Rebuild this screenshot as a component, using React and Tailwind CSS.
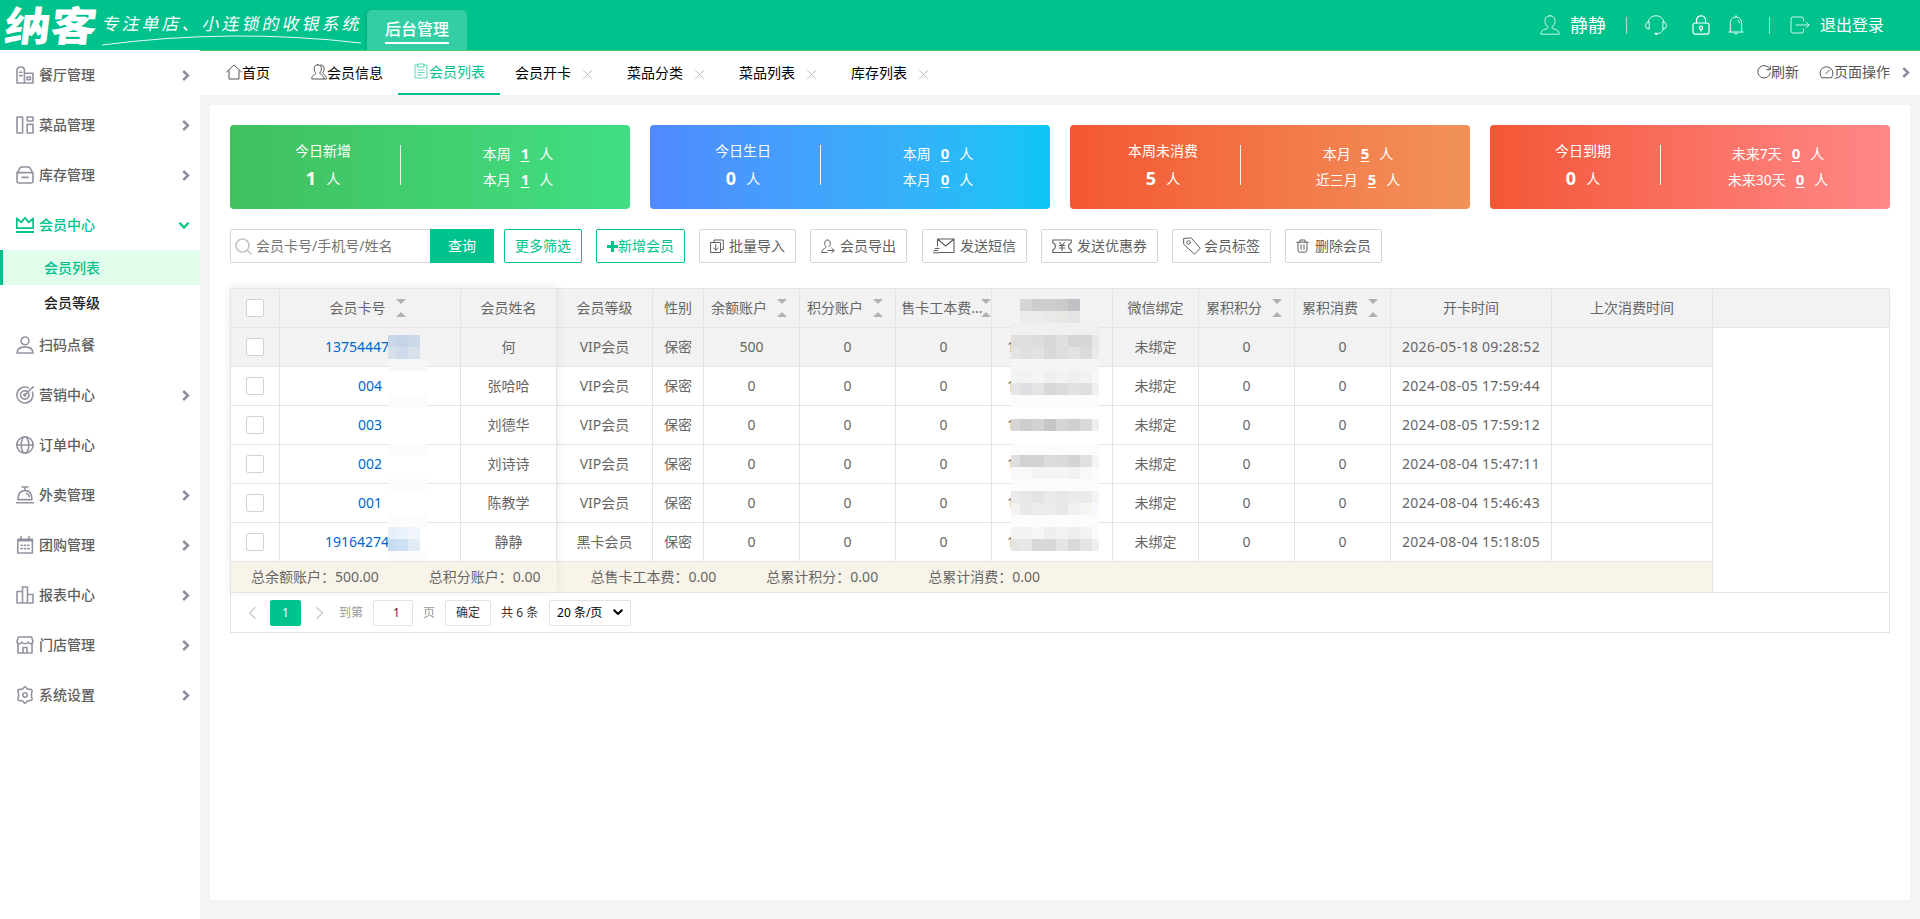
import React from "react";

/**
 * Panel de miembros
 * - Cabecera, menú lateral, pestañas, tarjetas de resumen y tabla
 */

// Iconos del menú lateral
const menuIcons = {
  restaurant: (
    <>
      <path d="M1 17V4.5Q1 1 4.7 1T8.4 4.5V17M8.4 7.3H17V17H1M3.5 6.2h2.6M3.5 9.6h2.6" />
      <path d="M11 11h3.4v2.8H11z" />
    </>
  ),
  dish: <path d="M1 1h5.6v16H1zM11.2 1H17v4h-5.8zM11.2 8.4H17V17h-5.8z" />,
  stock: <path d="M1 6.6h16V15q0 2-2 2H3q-2 0-2-2zM1.6 6.4 4 1.8Q4.4 1 5.4 1h7.2q1 0 1.4.8l2.4 4.6M6 11.4h6" />,
  crown: <path d="M.8 2.4v9.8h16.4V2.4l-4.4 4L9 1.8 5.2 6.4zM0 16h18" strokeWidth="1.8" />,
  user: <path d="M9 1a3.9 3.9 0 1 0 0 7.8A3.9 3.9 0 0 0 9 1M1 17q.6-5.6 6-5.9h4q5.4.3 6 5.9z" />,
  target: (
    <>
      <path d="M16.4 6.2A8 8 0 1 1 12.2 1.7" />
      <path d="M12.6 7.3A4.2 4.2 0 1 1 10.7 5.2M8.6 9.2l6-6M14.2 3.4 17.4.8" />
      <circle cx="8.8" cy="9" r="1" />
    </>
  ),
  globe: (
    <>
      <circle cx="9" cy="9" r="8.2" />
      <ellipse cx="9" cy="9" rx="3.8" ry="8.2" />
      <path d="M1 9h16" />
    </>
  ),
  bell: <path d="M6 1h6M9 1v3M2 13.6Q2 4.6 9 4.6t7 9zM10.4 7.5q2.4.6 3 3M.4 16.8h17.2" />,
  calendar: (
    <>
      <path d="M1.8 3.2h14.6V17H1.8zM2 4.7h14.4M5 .6v3M13 .6v3" />
      <path d="M5 9.2h1.2M8.4 9.2h1.2M11.8 9.2H13M5 12.6h1.2M8.4 12.6h1.2M11.8 12.6H13" />
    </>
  ),
  chart: <path d="M1 5.5h5.5V17H1zM6.5 1h5v16h-5zM11.5 8.5H17V17h-5.5z" />,
  shop: <path d="M2 8v9h14V8M2.4 1h13.2L17 5.5q-.4 2.2-2.4 2.2T12 6q-.8 1.7-3 1.7T6 6q-.6 1.7-2.6 1.7T1 5.5zM7 17v-5.5h4V17" />,
  gear: (
    <>
      <path d="M9 .8c1 0 1.5 2 3 2.4s3.500-.3 4 .8-.6 2.500-.6 5 1 4 .6 5-2.500.4-4 .8-2 2.400-3 2.400-1.500-2-3-2.400-3.500.3-4-.8.6-2.500.6-5-1-4-.6-5 2.500-.4 4-.8 2-2.400 3-2.400z" />
      <circle cx="9" cy="9" r="2.2" />
    </>
  ),
};

const menu = [
  { label: "餐厅管理", icon: "restaurant", arrow: true },
  { label: "菜品管理", icon: "dish", arrow: true },
  { label: "库存管理", icon: "stock", arrow: true },
  { label: "会员中心", icon: "crown", open: true, children: ["会员列表", "会员等级"] },
  { label: "扫码点餐", icon: "user" },
  { label: "营销中心", icon: "target", arrow: true },
  { label: "订单中心", icon: "globe" },
  { label: "外卖管理", icon: "bell", arrow: true },
  { label: "团购管理", icon: "calendar", arrow: true },
  { label: "报表中心", icon: "chart", arrow: true },
  { label: "门店管理", icon: "shop", arrow: true },
  { label: "系统设置", icon: "gear", arrow: true },
];

const stats = [
  {
    title: "今日新增",
    value: 1,
    lines: [["本周", 1], ["本月", 1]],
    bg: "bg-linear-to-r from-[#41c05e] to-[#41de83]",
  },
  {
    title: "今日生日",
    value: 0,
    lines: [["本周", 0], ["本月", 0]],
    bg: "bg-linear-to-r from-[#5089ff] to-[#0bc6f5]",
  },
  {
    title: "本周未消费",
    value: 5,
    lines: [["本月", 5], ["近三月", 5]],
    bg: "bg-linear-to-r from-[#f35633] to-[#f1925a]",
  },
  {
    title: "今日到期",
    value: 0,
    lines: [["未来7天", 0], ["未来30天", 0]],
    bg: "bg-linear-to-r from-[#f35633] to-[#ff8787]",
  },
];

const columns = [
  { key: "check", w: "w-[49px]" },
  { key: "card", label: "会员卡号", w: "w-[181px]", sort: true },
  { key: "name", label: "会员姓名", w: "w-[96px]" },
  { key: "level", label: "会员等级", w: "w-[96px]" },
  { key: "sex", label: "性别", w: "w-[51px]" },
  { key: "balance", label: "余额账户", w: "w-[96px]", sort: true },
  { key: "points", label: "积分账户", w: "w-[96px]", sort: true },
  { key: "fee", label: "售卡工本费...", w: "w-[96px]", sort: true, tight: true },
  { key: "phone", label: "", w: "w-[121px]" },
  { key: "wechat", label: "微信绑定", w: "w-[86px]" },
  { key: "sumPoints", label: "累积积分", w: "w-[96px]", sort: true },
  { key: "sumSpent", label: "累积消费", w: "w-[96px]", sort: true },
  { key: "created", label: "开卡时间", w: "w-[161px]" },
  { key: "last", label: "上次消费时间", w: "w-[161px]" },
];

const members = [
  { card: "13754447", name: "何", level: "VIP会员", balance: 500, created: "2026-05-18 09:28:52", masked: true, hover: true },
  { card: "004", name: "张哈哈", level: "VIP会员", balance: 0, created: "2024-08-05 17:59:44" },
  { card: "003", name: "刘德华", level: "VIP会员", balance: 0, created: "2024-08-05 17:59:12" },
  { card: "002", name: "刘诗诗", level: "VIP会员", balance: 0, created: "2024-08-04 15:47:11" },
  { card: "001", name: "陈教学", level: "VIP会员", balance: 0, created: "2024-08-04 15:46:43" },
  { card: "19164274", name: "静静", level: "黑卡会员", balance: 0, created: "2024-08-04 15:18:05", masked: true },
];

// Mosaicos que ocultan los datos personales; cada fila mide 12px
const W = "#ffffff";
const F = "#fcfcfc";
const cardMask = [
  ["#cad7e8", "#c5d4e6", "#cbd8e8", "#f2f2f2"],
  ["#d8e0ec", "#cfdbea", "#d8e1ec", "#f2f2f2"],
  ["#f6f6f6", "#f6f6f6", "#f6f6f6", "#f6f6f6"],
  [W, W, W, W],
  [W, W, W, W],
  [F, F, F, F],
  [W, W, W, W],
  [W, W, W, W],
  [W, W, W, W],
  [F, F, F, F],
  [W, W, W, W],
  [W, W, W, W],
  [F, F, F, F],
  [W, W, W, W],
  [W, W, W, W],
  [F, F, F, F],
  ["#e6eff9", "#e9f2fb", "#f0f6fb", W],
  ["#c8dcf1", "#cee1f4", "#e1ebf5", W],
  [F, F, F, F],
];
const row = (c) => [c, c, c, c, c, c, c, c];
const phoneMask = [
  ["transparent", "#d6d6d6", "#cccdcd", "#cecece", "#c9cac9", "#c0c1c5", "transparent", "transparent"],
  ["transparent", "#ebebeb", "#ebebea", "#e8e9e9", "#e8e7e4", "#e3e5e7", "transparent", "transparent"],
  row("#f0f0f0"),
  ["#dfdedd", "#dddee0", "#dddddc", "#d6d7d9", "#dfdfde", "#d5d5d5", "#d6d6d6", "#e6e7e6"],
  ["#e3e4e3", "#dfdfdf", "#e1e2e2", "#d8d9da", "#dfdddb", "#e1e2e2", "#dadbda", "#e8eae8"],
  row("#f5f5f5"),
  ["#f3f3f2", "#f2f2f1", "#f5f5f5", "#eef0ef", "#f2f2f1", "#efefee", "#f1f2f1", "#f8faf9"],
  ["#e5e5e5", "#dedfe2", "#e5e4e2", "#d7d8da", "#dddcda", "#dfe1e3", "#dfdedc", "#eef0ef"],
  row(F),
  row(W),
  ["#d6d5d4", "#cccdcf", "#d5d3d2", "#c5c6c8", "#d6d5d3", "#cfd0d0", "#d9d9d9", "#eef0ef"],
  row(W),
  row(F),
  ["#dfdfde", "#d1d2d4", "#d5d3d2", "#dbdcdb", "#d9dad9", "#d3d4d6", "#e1e0df", "#f2f4f6"],
  ["#f7f8f7", "#f7f8f8", "#f3f4f3", "#f4f4f4", "#f4f5f4", "#f1f2f2", "#f7f8f7", "#fafbfa"],
  row(F),
  ["#eaeaea", "#e7e7e9", "#e4e2e3", "#eaeaea", "#e7e7e6", "#ebebeb", "#ebebea", "#f3f3f3"],
  ["#f3f3f2", "#e8e8ea", "#ebebeb", "#ebeceb", "#e7e8e7", "#f1f1f2", "#f5f5f3", "#f7fafc"],
  row(F),
  ["#f2f3f2", "#f1f2f1", "#f7f7f5", "#edf0ef", "#f2f3f2", "#eeefee", "#f2f3f2", "#f9fafa"],
  ["#e5e5e4", "#e5e7e9", "#d8d8d7", "#d7d9d8", "#e5e5e4", "#d9d9d8", "#e5e5e3", "#eef0ef"],
];

const Chevron = ({ className }) => (
  <svg className={className} width="8" height="11" viewBox="0 0 8 11" fill="none" stroke="currentColor" strokeWidth="2.4">
    <path d="M1.2 1 6 5.5 1.2 10" />
  </svg>
);

const Line = ({ w = 18, h = 18, sw = 1, className = "", children }) => (
  <svg
    className={`shrink-0 ${className}`}
    width={w}
    height={h}
    viewBox={`0 0 ${w} ${h}`}
    fill="none"
    stroke="currentColor"
    strokeWidth={sw}
    strokeLinejoin="round"
    strokeLinecap="round"
  >
    {children}
  </svg>
);

function Header() {
  return (
    <header className="flex h-[51px] border-b border-[#44cf6c] bg-[#00c28d] text-white">
      <div className="w-[98px] shrink-0 pl-[5px]">
        <div className="w-[92px] origin-center -skew-x-6 scale-y-88 whitespace-nowrap text-[46px] leading-[51px] font-black">
          纳客
        </div>
      </div>
      <div className="relative w-[269px] shrink-0 pl-[5px]">
        <div className="-skew-x-12 whitespace-nowrap font-['Noto_Sans_CJK_SC',sans-serif] text-[17px] leading-[46px] tracking-[3px]">
          专注单店、小连锁的收银系统
        </div>
        <svg className="absolute top-[35px] left-1" width="260" height="12" fill="none" stroke="white">
          <path d="M0 10Q130-7 259 8" strokeWidth=".9" />
        </svg>
      </div>
      <div className="mt-[10px] flex h-10 w-[100px] flex-col items-center rounded-t-[5px] bg-[#33cea4] pt-2 shadow-[-2px_0_3px_rgba(0,0,0,0.08)]">
        <span className="h-[24px] w-16 whitespace-nowrap text-base leading-[22px] font-medium">后台管理</span>
        <span className="h-[2px] w-16 bg-white" />
      </div>
      <div className="ml-auto flex items-center pr-[36px]">
        <Line w={20} h={20} className="text-white/80">
          <path d="M10 .8C6.500.8 5 3 5 5.700c0 2.800 1.200 5 3 6 .2 1.400-.4 1.700-2 2.300C2.500 15 .8 16 .8 19.200h18.400c0-3.200-1.700-4.200-5.200-5.200-1.600-.6-2.200-.9-2-2.300 1.800-1 3-3.200 3-6C15 3 13.500.8 10 .8z" />
        </Line>
        <span className="ml-[10px] text-lg">静静</span>
        <span className="ml-5 h-[17px] w-px bg-white/60" />
        <Line w={22} h={20} className="ml-[18px] text-white/90">
          <path d="M3 7C3.800 3 7 .8 11 .8S18.200 3 19 7M4.200 7v7H3q-2.400-.5-2.400-3.500T3 7zM17.800 7v7H19q2.400-.5 2.400-3.500T19 7zM18.500 14q-1.500 4.600-7 4.800" />
          <path d="M10.500 18.800h1.500" strokeWidth="2" />
        </Line>
        <Line w={18} h={20} sw={1.2} className="ml-[25px]">
          <rect x="1" y="8" width="16" height="11.200" rx="2.500" />
          <path d="M4.500 8V5a4.500 4.200 0 0 1 9 0v3M9 14.500v1.600" />
          <circle cx="9" cy="12.800" r="1.600" />
        </Line>
        <Line w={16} h={20} className="ml-[18px] text-white/90">
          <path d="M8 .6v1.400M1 17h14M2.300 17V9c0-4.500 2.200-7 5.700-7s5.700 2.500 5.700 7v8M6 18q2 2.400 4 0M10 5q1.300 1 1.500 3" />
        </Line>
        <span className="ml-[25px] h-[17px] w-px bg-white/60" />
        <Line w={20} h={18} className="ml-5 text-white/80">
          <path d="M13.500 5V3q0-2-2-2H3Q1 1 1 3v12q0 2 2 2h8.500q2 0 2-2v-2M6 9h13M16 6l3 3-3 3" />
        </Line>
        <span className="ml-[10px] text-base">退出登录</span>
      </div>
    </header>
  );
}

function Sidebar() {
  return (
    <aside className="w-[200px] shrink-0 bg-white text-sm font-medium">
      {menu.map((m) => (
        <div key={m.label}>
          <div
            className={`flex h-[50px] items-center pr-[10px] pl-4 ${m.open ? "text-[#00c28d]" : "text-[#5f5f5f]"}`}
          >
            <Line sw={1.6} className={m.open ? "" : "text-[#9293a0]"}>
              {menuIcons[m.icon]}
            </Line>
            <span className="ml-[5px]">{m.label}</span>
            {m.arrow && <Chevron className="ml-auto text-[#8c8e9b]" />}
            {m.open && <Chevron className="mr-[2px] ml-auto rotate-90" />}
          </div>
          {m.children?.map((c, i) => (
            <div
              key={c}
              className={`flex h-[35px] items-center border-l-3 pl-[41px] ${
                i === 0 ? "border-[#00c28d] bg-[#e2fdeb] text-[#00c28d]" : "border-transparent text-[#222]"
              }`}
            >
              {c}
            </div>
          ))}
        </div>
      ))}
    </aside>
  );
}

function TabBar() {
  return (
    <nav className="flex h-[44px] bg-white pl-[10px] text-sm leading-[44px] text-black">
      <div className="flex w-[86px] items-center pl-4">
        <Line w={16} h={16} className="-mt-[3px] text-[#555]">
          <path d="M.5 8 8 1l7.500 7M3 6.500V15h10V6.500" />
        </Line>
        首页
      </div>
      <div className="flex w-[102px] items-center pl-[15px]">
        <Line w={16} h={16} className="-mt-[3px] text-[#555]">
          <path d="M6.800.8C4.500.8 3.200 2.300 3.200 4.800c0 2 .8 3.400 1.800 4.200 0 1.500-4.300 1.500-4.300 6h12.200c0-4.500-4.300-4.500-4.300-6 1-.8 1.800-2.200 1.800-4.200C10.400 2.300 9.100.8 6.800.8zM9.500 1c2.400 0 3.600 1.400 3.600 3.800 0 2-.6 3.200-1.500 4 .2 1.400 3.700 1.800 3.700 6.200h-2.400" />
        </Line>
        会员信息
      </div>
      <div className="flex w-[102px] items-center border-b-2 border-[#00c28d] pl-[15px] text-[#00c28d]">
        <Line w={16} h={16} className="-mt-[3px] text-[#00c28d]/70">
          <path d="M5 2H2v13h12V2h-3M5 1h6v3H5zM5 7h6M5 9.500h6M5 12h4" strokeWidth=".9" />
        </Line>
        会员列表
      </div>
      {["会员开卡", "菜品分类", "菜品列表", "库存列表"].map((t) => (
        <div key={t} className="flex w-[112px] items-center pl-[15px]">
          {t}
          <Line w={9} h={9} className="mt-[2px] ml-[12px] text-[#bbb]">
            <path d="m.5.500 8 8M8.500.500l-8 8" />
          </Line>
        </div>
      ))}
      <div className="ml-auto flex items-center pr-[10px] pb-[2px] text-[#555]">
        <Line w={14} h={14}>
          <path d="M13 4.500A6.300 6.300 0 1 0 13.300 8M13.300 1v3.700H9.500" />
        </Line>
        <span>刷新</span>
        <Line w={15} h={14} className="ml-5">
          <path d="M2.500 12.500A6.500 6.500 0 1 1 12.500 12.500zM7 8.500l3.500-3.500" />
        </Line>
        <span>页面操作</span>
        <Chevron className="ml-[12px] text-[#8c8e9b]" />
      </div>
    </nav>
  );
}

function StatCard({ title, value, lines, bg }) {
  return (
    <div className={`flex h-[84px] w-[400px] items-center rounded text-sm text-white ${bg}`}>
      <div className="flex w-[170px] flex-col items-center pb-1 pl-4">
        <div className="h-[25px] leading-6">{title}</div>
        <div className="flex h-[28px] items-center gap-[10px]">
          <b className="text-lg leading-7">{value}</b>
          <span className="pt-[3px]">人</span>
        </div>
      </div>
      <div className="mb-1 h-10 w-px bg-white/90" />
      <div className="w-[229px] pb-[1px] pl-[5px]">
        {lines.map(([label, n]) => (
          <div key={label} className="flex h-[26px] items-center justify-center gap-[10px]">
            <span>{label}</span>
            <b className="text-[15px] underline underline-offset-2">{n}</b>
            <span>人</span>
          </div>
        ))}
      </div>
    </div>
  );
}

function ToolButton({ icon, label, className }) {
  return (
    <button className={`flex items-center rounded-xs border border-[#d6d6d6] px-[10px] text-[#5f5f5f] ${className}`}>
      {icon}
      <span className="ml-auto whitespace-nowrap">{label}</span>
    </button>
  );
}

function Toolbar() {
  return (
    <div className="mt-5 flex h-[34px] text-sm">
      <div className="flex w-[200px] items-center rounded-l-xs border border-r-0 border-[#d6d6d6] pl-[4px] text-[#757575]">
        <Line w={17} h={17} sw={1.6} className="text-[#c4c4c4]">
          <circle cx="7.500" cy="7.500" r="6.500" />
          <path d="m12.300 12.300 3.700 3.700" />
        </Line>
        <span className="ml-[4px]">会员卡号/手机号/姓名</span>
      </div>
      <button className="w-16 bg-[#00c28d] text-white">查询</button>
      <button className="ml-[10px] w-[78px] rounded-xs border border-[#00c28d] text-[#00c28d]">更多筛选</button>
      <button className="ml-[14px] flex w-[89px] items-center justify-center rounded-xs border border-[#00c28d] text-[#00c28d]">
        <svg width="11" height="11" fill="currentColor">
          <path d="M4 0h3v4h4v3H7v4H4V7H0V4h4z" />
        </svg>
        新增会员
      </button>
      <ToolButton
        className="ml-[14px] w-[97px]"
        label="批量导入"
        icon={
          <Line w={14} h={14}>
            <path d="M4 3V1h9.300v9.500H11M1 3.500h9.500v10H1zM5.700 5.500V11M3.500 9l2.200 2L8 9" />
          </Line>
        }
      />
      <ToolButton
        className="ml-[14px] w-[97px]"
        label="会员导出"
        icon={
          <Line w={14} h={15}>
            <path d="M6.500 1C4.500 1 3.700 2.400 3.700 4.300c0 1.700.7 2.700 1.500 3.400C5.300 9.500.8 9.200.8 13.500H6M6.500 1c2 0 2.800 1.400 2.800 3.300 0 1.700-.7 2.700-1.500 3.400M7 11.500h6M10.800 9.300l2.400 2.200-2.400 2.200" />
          </Line>
        }
      />
      <ToolButton
        className="ml-[15px] w-[105px]"
        label="发送短信"
        icon={
          <Line w={22} h={16} sw={1.1}>
            <path d="M4.500 8V1h16.500v13.500H6M4.500 1l8.200 7L21 1M2 10.500h4M.8 12.500h4M0 14.700h6" />
          </Line>
        }
      />
      <ToolButton
        className="ml-[14px] w-[117px]"
        label="发送优惠券"
        icon={
          <Line w={20} h={15} sw={1.1}>
            <path d="M.8 1h18.400v2.700q-2.600 1-2.600 3.600t2.600 3.600v2.600H.8v-2.600q2.600-1 2.600-3.600T.8 3.700zM7.500 3.500 10 6.500l2.500-3M7.200 6.500h5.600M7.200 9h5.600M10 6.500v5" />
          </Line>
        }
      />
      <ToolButton
        className="ml-[14px] w-[99px]"
        label="会员标签"
        icon={
          <Line w={18} h={18}>
            <path d="M1 1.500 8 .8l9.200 10.400-5.700 6L1 7.500z" />
            <circle cx="5.500" cy="5.500" r="1.800" />
          </Line>
        }
      />
      <ToolButton
        className="ml-[14px] w-[97px]"
        label="删除会员"
        icon={
          <Line w={13} h={14}>
            <path d="M.8 3.200h11.400M4 3V1h5v2M2 3.500V11q0 2.200 2 2.200h5q2 0 2-2.200V3.500M5 5.800v4.500M8 5.800v4.500" />
          </Line>
        }
      />
    </div>
  );
}

const Checkbox = () => <span className="size-[18px] rounded-xs border border-[#d2d2d2] bg-white" />;

const SortIcon = ({ tight }) => (
  <svg className={tight ? "-ml-[2px] shrink-0" : "mr-[5px] ml-[10px] shrink-0"} width="10" height="18" fill="#b2b2b2">
    <path d="M0 0h10L5 5zM0 18h10l-5-5z" />
  </svg>
);

function Mosaic({ rows, cols, className }) {
  return (
    <div className={`absolute ${className}`}>
      {rows.map((r, i) => (
        <div key={i} className="flex h-3">
          {r.map((c, j) => (
            <div
              key={j}
              className={j === 0 ? cols[0] : j === r.length - 1 ? cols[1] : "w-3"}
              style={{ background: c }}
            />
          ))}
        </div>
      ))}
    </div>
  );
}

function cellValue(m, key) {
  switch (key) {
    case "check":
      return <Checkbox />;
    case "card":
      return <span className="text-[#0066cc]">{m.card}</span>;
    case "sex":
      return "保密";
    case "phone":
      return "1";
    case "wechat":
      return "未绑定";
    case "created":
      return <span className="tracking-[0.3px] whitespace-nowrap">{m.created}</span>;
    case "last":
      return "";
    default:
      return m[key] ?? 0;
  }
}

function MemberTable() {
  return (
    <div className="relative mt-[25px] border border-[#e4e4e4] text-sm text-[#666]">
      <div className="flex h-[39px] border-b border-[#e4e4e4] bg-[#f2f2f2]">
        {columns.map((c) => (
          <div
            key={c.key}
            className={`flex shrink-0 items-center justify-center border-r border-[#e4e4e4] whitespace-nowrap ${c.w} ${
              c.tight ? "pl-[5px]" : ""
            }`}
          >
            {c.key === "check" ? <Checkbox /> : c.label}
            {c.sort && <SortIcon tight={c.tight} />}
          </div>
        ))}
      </div>
      <div className="w-[1482px]">
        {members.map((m) => (
          <div key={m.card} className={`flex h-[39px] border-b border-[#e4e4e4] ${m.hover ? "bg-[#f2f2f2]" : ""}`}>
            {columns.map((c) => (
              <div
                key={c.key}
                className={`flex shrink-0 items-center border-r border-[#e4e4e4] ${c.w} ${
                  c.key === "phone" ? "pl-[15px]" : c.key === "card" && m.masked ? "pl-[45px]" : "justify-center"
                }`}
              >
                {cellValue(m, c.key)}
              </div>
            ))}
          </div>
        ))}
        <div className="flex h-[30px] items-center gap-[50px] border-r border-[#e4e4e4] bg-[#f9f4e9] pl-5">
          <span>总余额账户：500.00</span>
          <span>总积分账户：0.00</span>
          <span>总售卡工本费：0.00</span>
          <span>总累计积分：0.00</span>
          <span>总累计消费：0.00</span>
        </div>
      </div>
      {/* Sombra de las columnas fijas */}
      <div className="pointer-events-none absolute -top-px -left-px h-[305px] w-[327px] shadow-[0_-1px_8px_rgba(0,0,0,0.09)]" />
      <Mosaic rows={cardMask} cols={["w-2", "w-2"]} className="top-[46px] left-[157px] h-[226px] overflow-hidden" />
      <Mosaic rows={phoneMask} cols={["w-[9px]", "w-[7px]"]} className="top-[10px] left-[780px]" />
      <div className="flex h-10 items-center border-t border-[#e4e4e4] pl-[17px] text-xs text-[#333]">
        <Line w={8} h={12} sw={1.3} className="text-[#c8c8c8]">
          <path d="M7 .8 1.500 6 7 11.200" />
        </Line>
        <span className="ml-[14px] flex h-[26px] w-[31px] items-center justify-center rounded-xs bg-[#00c28d] text-white">1</span>
        <Line w={8} h={12} sw={1.3} className="ml-[15px] text-[#c8c8c8]">
          <path d="M1 .8 6.500 6 1 11.200" />
        </Line>
        <span className="ml-[15px] text-[#999]">到第</span>
        <span className="ml-[10px] flex h-[26px] w-10 items-center rounded-xs border border-[#e2e2e2] pl-[19px]">1</span>
        <span className="ml-[10px] text-[#999]">页</span>
        <button className="ml-[10px] h-[26px] w-[46px] rounded-xs border border-[#e2e2e2] pt-px">确定</button>
        <span className="ml-[10px] w-[38px] whitespace-nowrap">共 6 条</span>
        <span className="ml-[10px] flex h-[26px] w-[82px] items-center rounded-xs border border-[#e2e2e2] pl-[7px] whitespace-nowrap text-black">
          20 条/页
          <Line w={10} h={7} sw={2} className="mr-[7px] ml-auto">
            <path d="m1.200 1.200 3.800 3.800 3.800-3.800" />
          </Line>
        </span>
      </div>
    </div>
  );
}

export default function App() {
  return (
    <div className="flex h-[919px] flex-col overflow-hidden bg-[#f4f4f4] font-['Noto_Sans','Noto_Sans_CJK_SC',sans-serif]">
      <Header />
      <div className="flex min-h-0 flex-1">
        <div className="-mt-px flex w-[200px] shrink-0 bg-white">
          <Sidebar />
        </div>
        <div className="flex flex-1 flex-col">
          <TabBar />
          <main className="mx-[10px] mt-[10px] h-[795px] rounded-xs bg-white p-5">
            <div className="flex gap-5">
              {stats.map((s) => (
                <StatCard key={s.title} {...s} />
              ))}
            </div>
            <Toolbar />
            <MemberTable />
          </main>
        </div>
      </div>
    </div>
  );
}
